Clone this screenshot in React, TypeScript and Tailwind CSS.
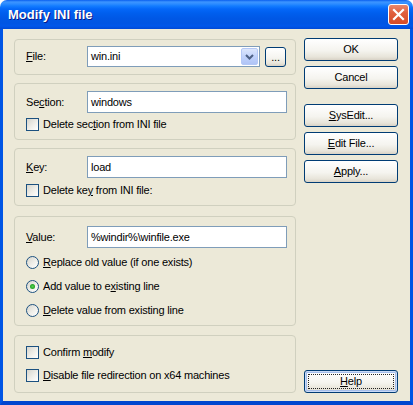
import React from "react";

const font = "font-['Liberation_Sans',Arial,sans-serif]";

const XpButton = ({
  children,
  className = "",
  focused = false,
}: {
  children: React.ReactNode;
  className?: string;
  focused?: boolean;
}) => (
  <div
    className={`relative flex items-center justify-center rounded-[3px] border border-[#003C74] bg-[linear-gradient(180deg,#ffffff_0%,#f5f4ef_55%,#e8e5da_85%,#d8d2c6_100%)] text-[11px] text-black ${
      focused ? "shadow-[inset_0_0_0_1px_#C9DAF7,inset_0_0_0_2px_#A6BEEA]" : ""
    } ${className}`}
  >
    {focused && <span className="absolute inset-[3px] border border-dotted border-[#222]" />}
    <span className="relative">{children}</span>
  </div>
);

const Checkbox = () => (
  <span className="block h-[13px] w-[13px] shrink-0 border border-[#1C5180] bg-[linear-gradient(135deg,#d6d5cd_0%,#f2f1ec_60%,#ffffff_100%)]" />
);

const Radio = ({ checked = false }: { checked?: boolean }) => (
  <span className="flex h-[13px] w-[13px] shrink-0 items-center justify-center rounded-full border border-[#1C5180] bg-[linear-gradient(135deg,#d6d5cd_0%,#f2f1ec_60%,#ffffff_100%)]">
    {checked && <span className="block h-[5px] w-[5px] rounded-full bg-[radial-gradient(circle,#55d055_0%,#21a121_70%,#1a8a1a_100%)]" />}
  </span>
);

const TextBox = ({ value, width = "w-[200px]" }: { value: string; width?: string }) => (
  <div className={`flex h-[22px] items-center border border-[#7F9DB9] bg-white pl-[3px] text-[11px] text-black ${width}`}>
    {value}
  </div>
);

const CheckRow = ({ children }: { children: React.ReactNode }) => (
  <div className="flex h-[13px] items-center gap-[4px] text-[11px] leading-none text-black">
    <Checkbox />
    <span>{children}</span>
  </div>
);

const RadioRow = ({ children, checked = false }: { children: React.ReactNode; checked?: boolean }) => (
  <div className="flex h-[13px] items-center gap-[4px] text-[11px] leading-none text-black">
    <Radio checked={checked} />
    <span>{children}</span>
  </div>
);

export default function App() {
  return (
    <div className={`h-[405px] w-[413px] select-none tracking-[-0.2px] ${font}`}>
      {/* Title bar */}
      <div className="flex h-[29px] items-center justify-between rounded-t-[7px] bg-[linear-gradient(180deg,#0A5FEE_0px,#3D95FF_2px,#2C8BFF_4px,#137CFF_6px,#0467F8_9px,#005FEE_13px,#0058E6_18px,#0055E3_23px,#0057EA_26px,#0049D6_29px)] pl-[8px] pr-[4px]">
        <span className="text-[13px] font-bold tracking-normal text-white [text-shadow:1px_1px_0_#0A1883]">Modify INI file</span>
        <div className="flex h-[21px] w-[21px] items-center justify-center rounded-[3px] border border-white bg-[linear-gradient(180deg,#E8886D_0%,#E0603F_40%,#D64B27_100%)]">
          <svg width="13" height="13" viewBox="0 0 13 13">
            <path d="M2 2 L11 11 M11 2 L2 11" stroke="white" strokeWidth="2.2" strokeLinecap="square" />
          </svg>
        </div>
      </div>

      {/* Frame + body */}
      <div className="h-[376px] border-x-[3px] border-b-[4px] border-x-[#0055E5] border-b-[#0046CF] bg-[#ECE9D8]">
        <div className="flex pl-[11px]">
          {/* Left column */}
          <div className="flex w-[282px] flex-col pt-[10px]">
            {/* File */}
            <div className="h-[36px] rounded-[4px] border border-[#D0D0BF] pl-[11px] pt-[6px]">
              <div className="flex items-center text-[11px] text-black">
                <span className="w-[61px]">
                  <u>F</u>ile:
                </span>
                <div className="flex h-[21px] w-[173px] items-center border border-[#7F9DB9] bg-white pl-[3px]">
                  <span className="flex-1">win.ini</span>
                  <span className="m-[1px] flex h-[17px] w-[17px] items-center justify-center rounded-[2px] border border-[#B4C8F6] bg-[linear-gradient(180deg,#DCE6FC_0%,#C1D3FB_50%,#B0C4F6_100%)]">
                    <svg width="9" height="6" viewBox="0 0 9 6">
                      <path d="M1 1 L4.5 4.5 L8 1" stroke="#4D6185" strokeWidth="2" fill="none" />
                    </svg>
                  </span>
                </div>
                <XpButton className="ml-[5px] mt-[1px] h-[20px] w-[21px]">...</XpButton>
              </div>
            </div>

            {/* Section */}
            <div className="mt-[8px] h-[57px] rounded-[4px] border border-[#D0D0BF] pl-[11px] pt-[7px]">
              <div className="flex items-center text-[11px] text-black">
                <span className="w-[61px]">
                  Se<u>c</u>tion:
                </span>
                <TextBox value="windows" />
              </div>
              <div className="mt-[5px]">
                <CheckRow>
                  Delete sec<u>t</u>ion from INI file
                </CheckRow>
              </div>
            </div>

            {/* Key */}
            <div className="mt-[8px] h-[58px] rounded-[4px] border border-[#D0D0BF] pl-[11px] pt-[7px]">
              <div className="flex items-center text-[11px] text-black">
                <span className="w-[61px]">
                  <u>K</u>ey:
                </span>
                <TextBox value="load" />
              </div>
              <div className="mt-[6px]">
                <CheckRow>
                  Delete ke<u>y</u> from INI file:
                </CheckRow>
              </div>
            </div>

            {/* Value */}
            <div className="mt-[10px] flex h-[110px] flex-col rounded-[4px] border border-[#D0D0BF] pl-[11px] pt-[9px]">
              <div className="flex items-center text-[11px] text-black">
                <span className="w-[61px]">
                  <u>V</u>alue:
                </span>
                <TextBox value={"%windir%\\winfile.exe"} />
              </div>
              <div className="mt-[8px] flex flex-col gap-[11px]">
                <RadioRow>
                  <u>R</u>eplace old value (if one exists)
                </RadioRow>
                <RadioRow checked>
                  Add value to e<u>x</u>isting line
                </RadioRow>
                <RadioRow>
                  <u>D</u>elete value from existing line
                </RadioRow>
              </div>
            </div>

            {/* Options */}
            <div className="mt-[9px] flex h-[58px] flex-col gap-[10px] rounded-[4px] border border-[#D0D0BF] pl-[11px] pt-[10px]">
              <CheckRow>
                Confirm <u>m</u>odify
              </CheckRow>
              <CheckRow>
                <u>D</u>isable file redirection on x64 machines
              </CheckRow>
            </div>
          </div>

          {/* Right column buttons */}
          <div className="ml-[8px] flex h-[372px] w-[94px] flex-col pb-[8px] pt-[9px]">
            <XpButton className="h-[23px]">OK</XpButton>
            <XpButton className="mt-[5px] h-[23px]">Cancel</XpButton>
            <XpButton className="mt-[15px] h-[23px]">
              <u>S</u>ysEdit...
            </XpButton>
            <XpButton className="mt-[5px] h-[23px]">
              <u>E</u>dit File...
            </XpButton>
            <XpButton className="mt-[5px] h-[23px]">
              <u>A</u>pply...
            </XpButton>
            <XpButton focused className="mt-auto h-[23px]">
              <u>H</u>elp
            </XpButton>
          </div>
        </div>
      </div>
    </div>
  );
}
